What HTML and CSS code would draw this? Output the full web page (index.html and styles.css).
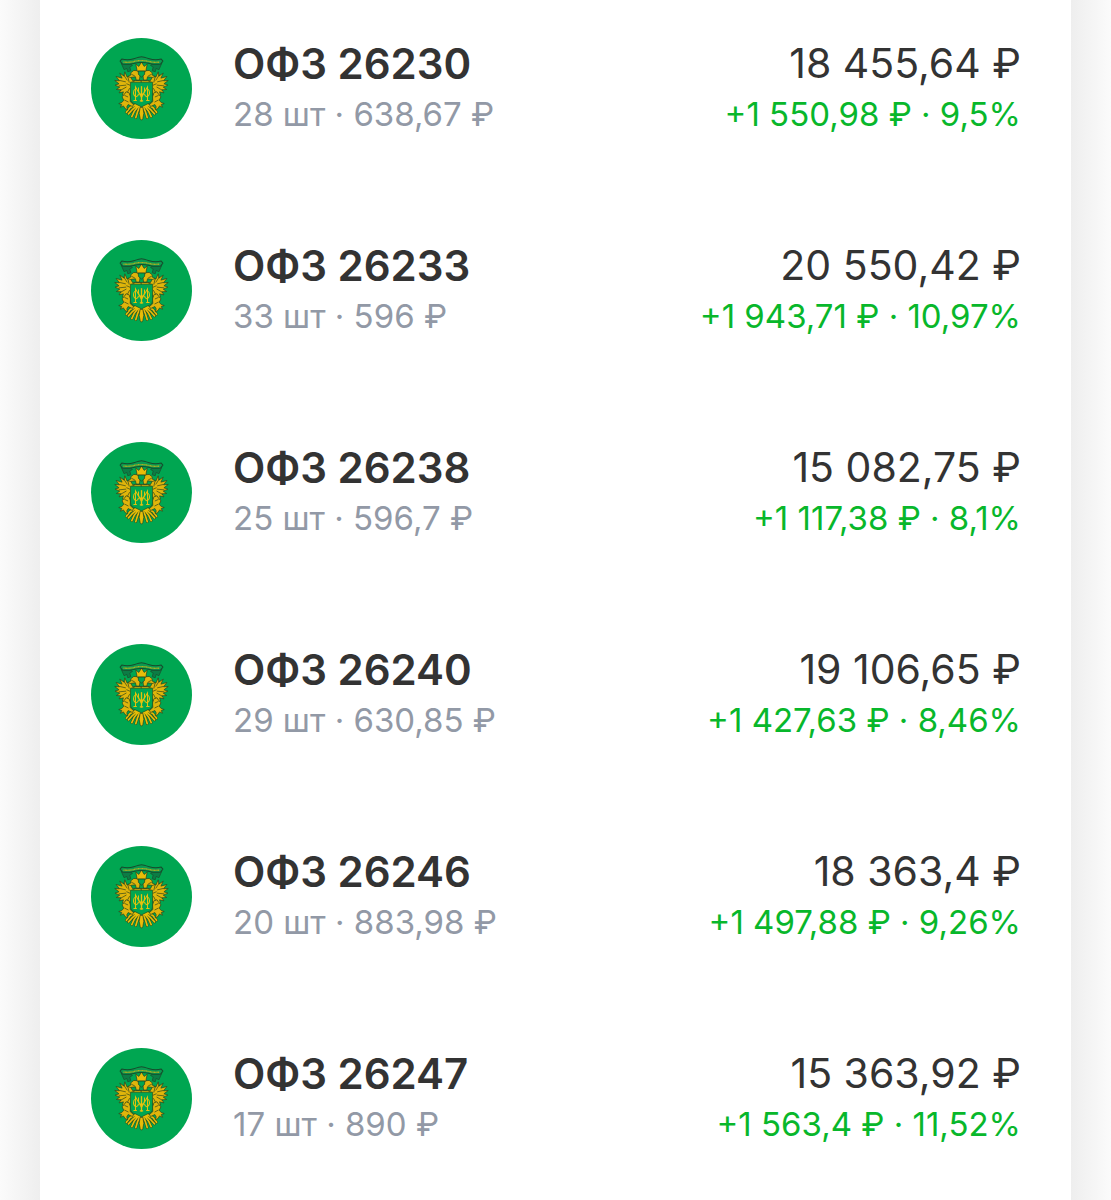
FILE: index.html
```
<!DOCTYPE html>
<html lang="ru">
<head>
    <meta charset="utf-8">
    <meta name="viewport" content="width=device-width, initial-scale=1">
    <title>Облигации</title>
    <link rel="stylesheet" href="styles.css">
</head>
<body>
    <svg class="sprite" aria-hidden="true">
        <symbol id="emblem" viewBox="15 15 302 302">
            <circle cx="166" cy="166" r="151" fill="#00a651"/>
            <!-- left half of the eagle, mirrored below -->
            <g id="eagle-half" stroke-linejoin="round" stroke-linecap="round">
                <path fill="#0b7d45" stroke="#1d4a2a" stroke-width="2" d="M106 92l8 18 8-4 3 10 9-3-3-11 8-5-8-6z"/>
                <!-- tail feathers -->
                <path fill="none" stroke="#27501c" stroke-width="8" d="M150 214l-18 9-11 14M154 216l-17 15-10 11M158 217l-13 16-8 17M162 218l-8 18-5 17"/>
                <path fill="none" stroke="#e8bd08" stroke-width="5" d="M150 214l-18 9-11 14M154 216l-17 15-10 11M158 217l-13 16-8 17M162 218l-8 18-5 17"/>
                <g fill="#e0b50b" stroke="#27401c" stroke-width="2">
                    <path d="M165 150h-28l-3 32-8 4-8-6 1 8-10-3 3-9-13 3 6-9-14-1 10-7-14-6 12-4-13-10 14 1-10-13 18 5-7-15 13 9 2-13 7 16 9-3 7 13h28z"/>
                    <path d="M150 140l-2-9-15 2-8-3 9-4 0-7 9-7 12 1 7 10-2 17z"/>
                    <path d="M121 176l8 3 4 12-1 14 10 9-3 6-13-6-4 7 3 9-8-4-5-8-9 4 4-8-9-3 9-3 6-7-5-10 6-7z"/>
                </g>
                <path fill="none" stroke="#27401c" stroke-width="2" d="M101 142l17 4M99 158l20-2M104 171l16-9M113 126l10 15M126 134l3 13M130 166l-6 11M122 152l9 4M116 187l9 4M116 201l10 5M137 124l8 4M146 143l-10 5"/>
            </g>
            <use href="#eagle-half" transform="translate(332 0) scale(-1 1)"/>
            <path fill="#e8bd08" stroke="#27401c" stroke-width="2" d="M162 222h8l3 18-3 16-4 5-4-5-3-16z"/>
            <path fill="#e8bd08" stroke="#27401c" stroke-width="2" d="M153 114l-4-21 9 7 8-13 8 13 9-7-4 21z"/>
            <path fill="#00a651" stroke="#27401c" stroke-width="2" d="M156 114h20l-1 10-9 8-9-8z"/>
            <!-- ribbon -->
            <path fill="#0b9950" stroke="#174b2c" stroke-width="3" stroke-linejoin="round" d="M107 78q18 5 36-1t23-6 23 6 36 1l5 6-7 9q-17 2-33-2-24-5-48 0-16 4-33 2l-7-9z"/>
            <path fill="none" stroke="#b5b01d" stroke-width="4" stroke-dasharray="3 1" d="M112 87q18 2 33-2 21-5 42 0 15 4 33 2"/>
            <!-- shield and monogram -->
            <path fill="#00a651" stroke="#27501c" stroke-width="2" d="M133 147h66v48q0 14-15 17l-18 9-18-9q-15-3-15-17z"/>
            <g fill="none" stroke="#e8c20c" stroke-width="3">
                <path stroke-width="4" d="M166 159v46"/>
                <path d="M142 202h10M180 202h10M148 202v-41l18 32 18-32v41M157 163v11q2 10 9 10t9-10v-11M161 203h10"/>
                <path d="M148 167q-6 3-6 12t8 12q6-1 7-9M184 167q6 3 6 12t-8 12q-6-1-7-9"/>
            </g>
        </symbol>
    </svg>

    <ul class="portfolio">
        <li class="bond">
            <svg class="bond-logo" aria-hidden="true"><use href="#emblem"/></svg>
            <div class="bond-info">
                <div class="bond-name">ОФЗ 26230</div>
                <div class="bond-count">28 шт · 638,67 ₽</div>
            </div>
            <div class="bond-value">
                <div class="bond-total">18 455,64 ₽</div>
                <div class="bond-profit">+1 550,98 ₽ · 9,5%</div>
            </div>
        </li>
        <li class="bond">
            <svg class="bond-logo" aria-hidden="true"><use href="#emblem"/></svg>
            <div class="bond-info">
                <div class="bond-name">ОФЗ 26233</div>
                <div class="bond-count">33 шт · 596 ₽</div>
            </div>
            <div class="bond-value">
                <div class="bond-total">20 550,42 ₽</div>
                <div class="bond-profit">+1 943,71 ₽ · 10,97%</div>
            </div>
        </li>
        <li class="bond">
            <svg class="bond-logo" aria-hidden="true"><use href="#emblem"/></svg>
            <div class="bond-info">
                <div class="bond-name">ОФЗ 26238</div>
                <div class="bond-count">25 шт · 596,7 ₽</div>
            </div>
            <div class="bond-value">
                <div class="bond-total">15 082,75 ₽</div>
                <div class="bond-profit">+1 117,38 ₽ · 8,1%</div>
            </div>
        </li>
        <li class="bond">
            <svg class="bond-logo" aria-hidden="true"><use href="#emblem"/></svg>
            <div class="bond-info">
                <div class="bond-name">ОФЗ 26240</div>
                <div class="bond-count">29 шт · 630,85 ₽</div>
            </div>
            <div class="bond-value">
                <div class="bond-total">19 106,65 ₽</div>
                <div class="bond-profit">+1 427,63 ₽ · 8,46%</div>
            </div>
        </li>
        <li class="bond">
            <svg class="bond-logo" aria-hidden="true"><use href="#emblem"/></svg>
            <div class="bond-info">
                <div class="bond-name">ОФЗ 26246</div>
                <div class="bond-count">20 шт · 883,98 ₽</div>
            </div>
            <div class="bond-value">
                <div class="bond-total">18 363,4 ₽</div>
                <div class="bond-profit">+1 497,88 ₽ · 9,26%</div>
            </div>
        </li>
        <li class="bond">
            <svg class="bond-logo" aria-hidden="true"><use href="#emblem"/></svg>
            <div class="bond-info">
                <div class="bond-name">ОФЗ 26247</div>
                <div class="bond-count">17 шт · 890 ₽</div>
            </div>
            <div class="bond-value">
                <div class="bond-total">15 363,92 ₽</div>
                <div class="bond-profit">+1 563,4 ₽ · 11,52%</div>
            </div>
        </li>
    </ul>
</body>
</html>
```

FILE: styles.css
```
:root {
    --text: #333333;
    --muted: #9299a6;
    --profit: #08b72b;
    --edge: 40px;
}

* {
    box-sizing: border-box;
}

body {
    margin: 0;
    font-family: Inter, Roboto, sans-serif;
    color: var(--text);
    background: linear-gradient(to right, #fbfbfb, #eeeeee var(--edge), #eeeeee calc(100% - var(--edge)), #fbfbfb);
}

.sprite {
    display: none;
}

.portfolio {
    display: flex;
    flex-direction: column;
    gap: 101px;
    min-height: 100vh;
    margin: 0 var(--edge);
    padding: 38px 50px 50px 51px;
    list-style: none;
    background: white;
}

.bond {
    display: flex;
    align-items: flex-start;
    gap: 41px;
    white-space: nowrap;
}

.bond-logo {
    flex: none;
    width: 101px;
    height: 101px;
}

.bond-info {
    flex: 1;
}

.bond-value {
    text-align: right;
}

.bond-name,
.bond-total {
    line-height: 51px;
}

.bond-name {
    font-size: 42px;
    font-weight: 600;
}

.bond-total {
    font-size: 41px;
}

.bond-count,
.bond-profit {
    font-size: 33px;
    line-height: 50px;
}

.bond-count {
    color: var(--muted);
}

.bond-profit {
    color: var(--profit);
}
```
